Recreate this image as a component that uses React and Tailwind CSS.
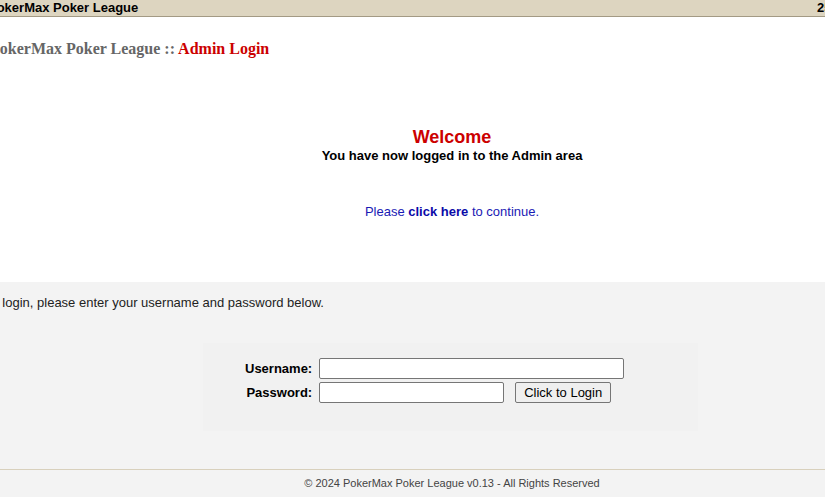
import React from "react";

const sans = { fontFamily: '"Liberation Sans", Arial, sans-serif' };

export default function App() {
  return (
    <div className="w-full h-[497px] overflow-hidden bg-[#f3f3f3] text-black" style={sans}>
      {/* page is scrolled a little to the right */}
      <div className="-ml-[12px] w-[928px]">
        <div className="flex h-[17px] bg-[#ddd5c0] border-b border-[#a39a84] text-[13px] font-bold leading-[16px] whitespace-nowrap">
          <span className="w-[829px]">PokerMax Poker League</span>
          <span>25 Apr 2024</span>
        </div>

        <div className="h-[265px] bg-white">
          <h1
            className="pt-[22px] pl-[2px] text-[16px] font-bold leading-[19px] text-[#666666]"
            style={{ fontFamily: '"Liberation Serif", "Times New Roman", serif' }}
          >
            PokerMax Poker League :: <span className="text-[#cc0000]">Admin Login</span>
          </h1>

          <div className="mt-[69px] text-center">
            <div className="text-[18px] font-bold leading-[21px] text-[#cc0000]">Welcome</div>
            <div className="text-[13px] font-bold leading-[16px]">You have now logged in to the Admin area</div>
            <p className="mt-[40px] text-[13px] leading-[16px] text-[#1a1ab4]">
              Please <a href="#" className="font-bold text-[#0a0aa8]">click here</a> to continue.
            </p>
          </div>
        </div>

        <div className="pt-[13px]">
          <p className="-ml-[3px] text-[13px] leading-[16px] text-[#222]">
            To login, please enter your username and password below.
          </p>

          <div className="ml-[215px] mt-[32px] w-[495px] h-[88px] bg-[#f1f1f1] pl-[42px] pt-[15px]">
            <div className="grid w-fit grid-cols-[auto_auto] gap-x-[7px] gap-y-[3px] items-center text-[13px]">
              <label className="text-right font-bold">Username:</label>
              <input type="text" className="w-[305px] h-[21px] bg-white border border-[#767676] rounded-[2px] px-1" />
              <label className="text-right font-bold">Password:</label>
              <div className="flex items-center gap-[11px]">
                <input type="password" className="w-[185px] h-[21px] bg-white border border-[#767676] rounded-[2px] px-1" />
                <button className="w-[96px] h-[21px] bg-[#efefef] border border-[#767676] rounded-[2px] text-[13px] leading-[19px]">
                  Click to Login
                </button>
              </div>
            </div>
          </div>

          <div className="mt-[38px] border-t border-[#d8d0bc] pt-[7px] text-center text-[11px] leading-[13px] text-[#444]">
            © 2024 PokerMax Poker League v0.13 - All Rights Reserved
          </div>
        </div>
      </div>
    </div>
  );
}
